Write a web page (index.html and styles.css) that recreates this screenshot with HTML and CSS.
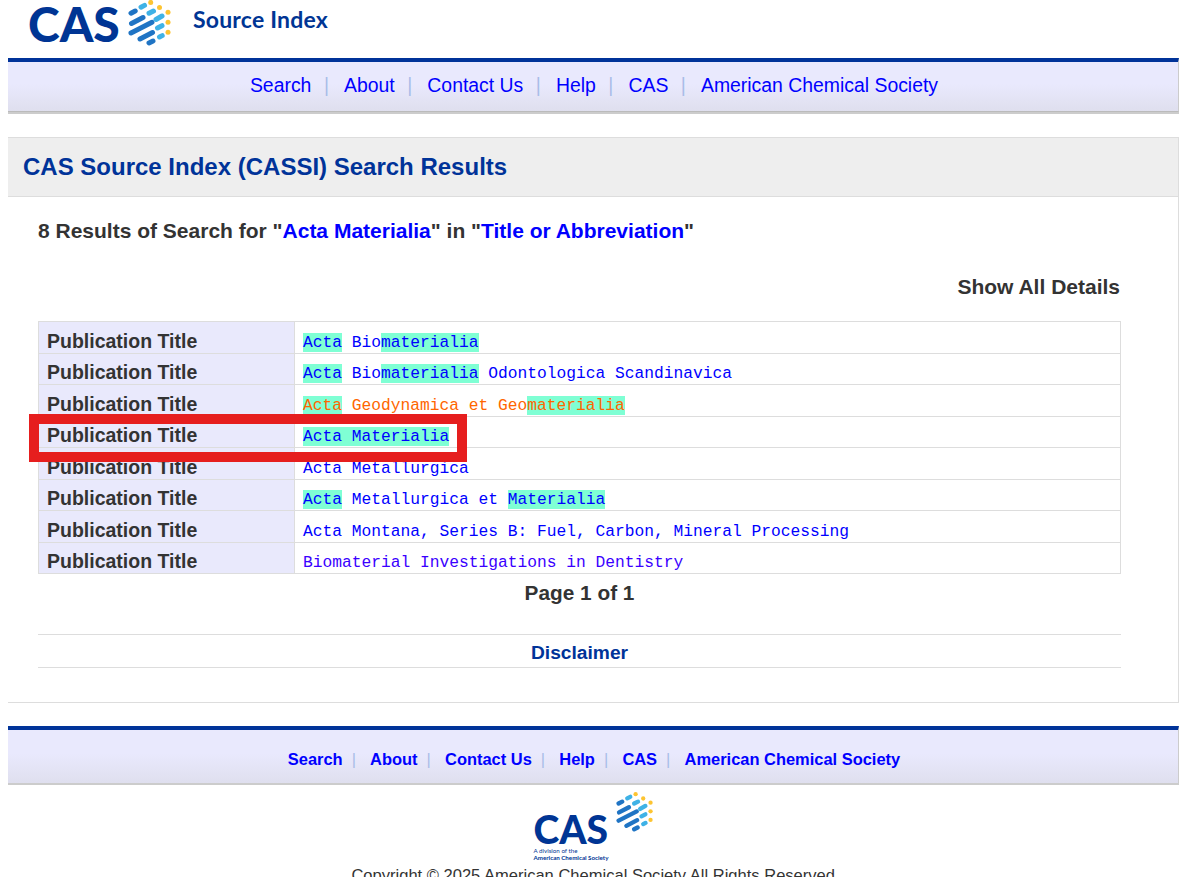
FILE: index.html
```html
<!DOCTYPE html>
<html lang="en">
<head>
<meta charset="utf-8">
<title>CAS Source Index (CASSI) Search Results</title>
<link rel="stylesheet" href="styles.css">
</head>
<body>
<svg class="defs" width="0" height="0" aria-hidden="true">
  <symbol id="mark" viewBox="128 0 44 46">
    <g fill="none" stroke-linecap="round" stroke-width="5">
      <g stroke="#1f74c4">
        <path d="M131 13.2 135.2 11"/>
        <path d="M131.5 23.5 143 17.5"/>
        <path d="M131 33 152 22.3"/>
        <path d="M140 39 152.5 32.5"/>
        <path d="M149 43 153 41"/>
      </g>
      <g stroke="#3fb2e6">
        <path d="M141 7.2 144.5 5.4"/>
        <path d="M149 13.2 153.5 11"/>
        <path d="M156 19.5 162 16"/>
        <path d="M157.5 28 162 25.7"/>
        <path d="M159.5 37 162.2 35.6"/>
      </g>
    </g>
    <g fill="#fdc431">
      <circle cx="150.7" cy="2.4" r="2.5"/>
      <circle cx="159.5" cy="7.4" r="2.5"/>
      <circle cx="168" cy="12.2" r="2.5"/>
      <circle cx="168" cy="22.2" r="2.5"/>
      <circle cx="168" cy="32.2" r="2.5"/>
    </g>
  </symbol>
</svg>

<header class="brand">
  <span class="brand-cas">CAS</span>
  <svg class="brand-mark"><use href="#mark"/></svg>
  <span class="brand-name">Source Index</span>
</header>

<nav class="topnav">
  <a href="#">Search</a><span class="sep">|</span>
  <a href="#">About</a><span class="sep">|</span>
  <a href="#">Contact Us</a><span class="sep">|</span>
  <a href="#">Help</a><span class="sep">|</span>
  <a href="#">CAS</a><span class="sep">|</span>
  <a href="#">American Chemical Society</a>
</nav>

<main class="card">
  <h1 class="card-title">CAS Source Index (CASSI) Search Results</h1>
  <div class="card-body">
    <h2 class="summary">8 Results of Search for "<a href="#">Acta Materialia</a>" in "<a href="#">Title or Abbreviation</a>"</h2>
    <p class="details">Show All Details</p>
    <table class="results">
      <tr><th>Publication Title</th><td><a href="#"><mark>Acta</mark> Bio<mark>materialia</mark></a></td></tr>
      <tr><th>Publication Title</th><td><a href="#"><mark>Acta</mark> Bio<mark>materialia</mark> Odontologica Scandinavica</a></td></tr>
      <tr><th>Publication Title</th><td><a href="#" class="visited"><mark>Acta</mark> Geodynamica et Geo<mark>materialia</mark></a></td></tr>
      <tr><th>Publication Title</th><td><a href="#"><mark>Acta Materialia</mark></a></td></tr>
      <tr><th>Publication Title</th><td><a href="#">Acta Metallurgica</a></td></tr>
      <tr><th>Publication Title</th><td><a href="#"><mark>Acta</mark> Metallurgica et <mark>Materialia</mark></a></td></tr>
      <tr><th>Publication Title</th><td><a href="#">Acta Montana, Series B: Fuel, Carbon, Mineral Processing</a></td></tr>
      <tr><th>Publication Title</th><td><a href="#" class="purple">Biomaterial Investigations in Dentistry</a></td></tr>
    </table>
    <p class="pager">Page 1 of 1</p>
    <p class="disclaimer"><a href="#">Disclaimer</a></p>
  </div>
</main>

<nav class="footnav">
  <a href="#">Search</a><span class="sep">|</span>
  <a href="#">About</a><span class="sep">|</span>
  <a href="#">Contact Us</a><span class="sep">|</span>
  <a href="#">Help</a><span class="sep">|</span>
  <a href="#">CAS</a><span class="sep">|</span>
  <a href="#">American Chemical Society</a>
</nav>

<footer class="foot">
  <div class="foot-logo">
    <div class="foot-text">
      <span class="foot-cas">CAS</span>
      <span class="foot-line">A division of the</span>
      <span class="foot-line foot-strong">American Chemical Society</span>
    </div>
    <svg class="foot-mark"><use href="#mark"/></svg>
  </div>
  <p class="copyright">Copyright © 2025 American Chemical Society All Rights Reserved.</p>
</footer>

<div class="callout"></div>
</body>
</html>
```

FILE: styles.css
```css
html {
  height: 877px;
  overflow: hidden;
}
body {
  position: relative;
  margin: 0 1px 0 8px;
  font-family: "Liberation Sans", Arial, sans-serif;
  color: #333;
  background: #fff;
}
.defs {
  position: absolute;
}
a {
  text-decoration: none;
  color: #0000ff;
}

/* brand */
.brand {
  display: flex;
  align-items: flex-start;
  height: 58px;
  padding-left: 20px;
}
.brand-cas {
  font-family: Lato, "Liberation Sans", sans-serif;
  font-weight: 900;
  font-size: 48px;
  line-height: 47px;
  color: #003594;
  width: 100px;
}
.brand-mark {
  width: 44px;
  height: 46px;
}
.brand-name {
  font-family: Lato, "Liberation Sans", sans-serif;
  font-weight: 700;
  font-size: 23px;
  line-height: 26px;
  color: #003594;
  margin: 6px 0 0 21px;
  letter-spacing: 0.2px;
}

/* navs */
.topnav, .footnav {
  display: flex;
  justify-content: center;
  align-items: center;
  border-top: 4px solid #003399;
  background: linear-gradient(#e9e9fd 0%, #e9e9fd 45%, #dfdfee 100%);
}
.topnav {
  box-sizing: border-box;
  height: 54px;
  font-size: 19.4px;
  padding: 0 0 3px 2px;
  border-bottom: 1px solid #bbb;
  border-right: 1px solid #ccc;
  box-shadow: 0 2px 0 #ccc;
}
.topnav .sep {
  margin: 0 15.1px 0 12.5px;
  color: #a9bde8;
}
.footnav {
  box-sizing: border-box;
  height: 59px;
  margin-top: 23px;
  font-size: 16.45px;
  font-weight: 700;
  padding: 5px 0 0 2px;
  border-bottom: 2px solid #ccc;
  border-right: 1px solid #ccc;
}
.footnav .sep {
  margin: 0 14.2px 0 9px;
  color: #a9bde8;
  font-weight: 400;
}

/* card */
.card {
  margin: 25px 0 0 -1px;
  border: 1px solid #ddd;
  height: 564px;
}
.card-title {
  box-sizing: border-box;
  height: 59px;
  margin: 0;
  padding: 15px 15px 0;
  font-size: 24px;
  line-height: 28px;
  color: #003399;
  background: #eee;
  border-bottom: 1px solid #ddd;
}
.card-body {
  padding: 0 57px 0 30px;
}
.summary {
  margin: 0;
  padding-top: 22px;
  font-size: 21px;
  line-height: 24px;
}
.details {
  margin: 32px 1px 0 0;
  text-align: right;
  font-size: 21px;
  font-weight: 700;
  line-height: 24px;
}

/* table */
.results {
  width: 100%;
  margin-top: 22px;
  border-collapse: collapse;
  table-layout: fixed;
}
.results th, .results td {
  box-sizing: border-box;
  padding: 0;
  border: 1px solid #ddd;
  white-space: nowrap;
}
.results tr:nth-child(odd) { height: 32px; }
.results tr:nth-child(even) { height: 31px; }
.results th {
  width: 256px;
  padding: 6px 0 0 8px;
  text-align: left;
  vertical-align: top;
  font-size: 19.5px;
  line-height: 24px;
  background: #e9e9fc;
  overflow: hidden;
}
.results td {
  padding: 10px 0 0 8px;
  vertical-align: top;
  font-family: "Liberation Mono", monospace;
  font-size: 16.25px;
  line-height: 20px;
  overflow: hidden;
}
.results tr:nth-child(odd) th { padding-top: 7px; }
.results tr:nth-child(odd) td { padding-top: 11px; }
.results mark {
  color: inherit;
  background: #7fffd4;
}
.results .visited { color: #ff6600; }
.results .purple { color: #3a00ff; }

.pager {
  margin: 7px 0 0;
  text-align: center;
  font-size: 20.8px;
  font-weight: 700;
  line-height: 24px;
}
.disclaimer {
  margin: 29px 0 0;
  height: 34px;
  box-sizing: border-box;
  border-top: 1px solid #ddd;
  border-bottom: 1px solid #ddd;
  text-align: center;
  font-size: 19.2px;
  font-weight: 700;
  line-height: 36px;
}
.disclaimer a { color: #003399; }

/* footer */
.foot {
  text-align: center;
}
.foot-logo {
  display: flex;
  justify-content: center;
  align-items: flex-start;
  height: 75px;
}
.foot-text {
  display: flex;
  flex-direction: column;
  align-items: flex-start;
  width: 82px;
  padding-top: 26px;
  color: #003594;
  font-family: Lato, "Liberation Sans", sans-serif;
}
.foot-cas {
  font-weight: 900;
  font-size: 39px;
  line-height: 36px;
}
.foot-line {
  font-size: 6.2px;
  line-height: 7px;
}
.foot-strong {
  font-weight: 700;
  white-space: nowrap;
}
.foot-mark {
  width: 38px;
  height: 40px;
  margin-top: 7px;
}
.copyright {
  margin: 7px 0 0;
  padding-left: 4px;
  font-size: 16.55px;
  line-height: 18px;
  color: #333;
}

/* red annotation */
.callout {
  position: absolute;
  left: 21px;
  top: 414px;
  width: 418px;
  height: 28px;
  border: 10px solid #e61e1e;
}
```
